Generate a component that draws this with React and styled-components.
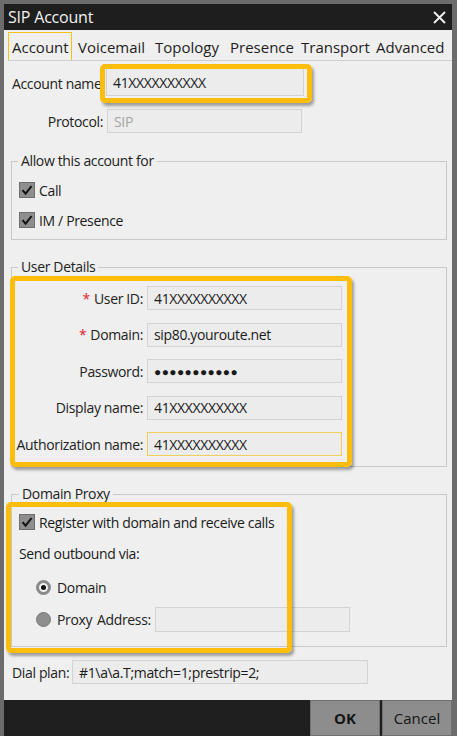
import React from 'react'
import styled, { createGlobalStyle } from 'styled-components'

const GlobalStyle = createGlobalStyle`
  html, body {
    margin: 0;
    padding: 0;
    background: #6c6c6c;
  }
  * { box-sizing: border-box; }
`

const FONT = `"Open Sans", "Noto Sans", sans-serif`

const Frame = styled.div`
  width: 457px;
  height: 736px;
  padding: 4px 5px 0 4px;
  background: #6c6c6c;
  display: flex;
  flex-direction: column;
  font-family: ${FONT};
  font-size: 14px;
  letter-spacing: -0.35px;
  color: #1a1a1a;
`

const TitleBar = styled.div`
  height: 26px;
  background: #1e1e1e;
  color: #f2f2f2;
  display: flex;
  align-items: center;
  justify-content: space-between;
  padding: 0 6px 0 4px;
  font-size: 16px;
  letter-spacing: -0.2px;
`

const Body = styled.div`
  flex: 1;
  background: #efefef;
  display: flex;
  flex-direction: column;
  padding: 0 6px 0 8px;
`

const TabBar = styled.div`
  height: 31px;
  display: flex;
  gap: 2px;
  margin: 0 -6px 0 -4px;
  border-bottom: 1px solid #cfcfcf;
`

const Tab = styled.div`
  width: ${p => p.$w}px;
  height: 28px;
  margin-top: 2px;
  padding-left: 3px;
  display: flex;
  align-items: center;
  font-size: 15px;
  letter-spacing: 0;
  color: #1d1d1d;
  border: 1px solid ${p => (p.$active ? '#f2c21a' : 'transparent')};
  border-bottom: none;
  white-space: nowrap;
`

const Row = styled.div`
  display: flex;
  align-items: center;
  height: ${p => p.$h || 24}px;
  margin-top: ${p => p.$mt || 0}px;
  gap: ${p => (p.$gap == null ? 4 : p.$gap)}px;
`

const Label = styled.div`
  width: ${p => p.$w}px;
  flex: none;
  text-align: ${p => p.$align || 'right'};
  white-space: nowrap;
  color: #222;
`

const Required = styled.span`
  color: #e0262b;
  margin-right: 4px;
`

const Field = styled.input`
  width: ${p => p.$w || 195}px;
  height: ${p => p.$h || 24}px;
  flex: none;
  padding: 0 6px;
  border: 1px solid ${p => (p.$focus ? '#f3cf57' : '#d3d3d3')};
  background: #ececec;
  font-family: ${FONT};
  font-size: ${p => p.$size || 14}px;
  letter-spacing: ${p => (p.$size ? '0.4px' : '-0.35px')};
  color: ${p => (p.disabled ? '#a5a5a5' : '#1a1a1a')};
  outline: none;
`

const Highlight = styled.div`
  position: relative;
  border-radius: 5px;
  width: ${p => p.$w}px;
  height: ${p => (p.$h ? p.$h + 'px' : 'auto')};
  padding: ${p => p.$pad || '0'};
  margin: ${p => p.$m || '0'};
  &::after {
    content: '';
    position: absolute;
    inset: 0;
    border: 5px solid #fdbd0d;
    border-radius: 5px;
    box-shadow: 2px 3px 3px rgba(0, 0, 0, 0.35);
    pointer-events: none;
    z-index: 2;
  }
`

const Group = styled.fieldset`
  margin: ${p => p.$mt}px -1px 0 -1px;
  padding: 0;
  border: 1px solid #c9c9c9;
  min-width: 0;
`

const Legend = styled.legend`
  margin-left: ${p => p.$ml || 6}px;
  padding: 0 3px;
  line-height: 20px;
  font-size: 14px;
  color: #222;
`

const Stack = styled.div`
  display: flex;
  flex-direction: column;
  gap: ${p => p.$gap}px;
  padding: ${p => p.$pad || '0'};
`

const Box = styled.span`
  width: 16px;
  height: 16px;
  flex: none;
  background: #8e8e8e;
  border: 1px solid #6e6e6e;
  display: flex;
  align-items: center;
  justify-content: center;
`

const Radio = styled.span`
  width: 15px;
  height: 15px;
  flex: none;
  border-radius: 50%;
  background: ${p => (p.$on ? '#f2f2f2' : '#8e8e8e')};
  border: ${p => (p.$on ? '3px solid #8a8a8a' : '1px solid #7a7a7a')};
  display: flex;
  align-items: center;
  justify-content: center;
  margin-left: ${p => p.$ml || 0}px;
  &::after {
    content: '';
    display: ${p => (p.$on ? 'block' : 'none')};
    width: 5px;
    height: 5px;
    border-radius: 50%;
    background: #111;
  }
`

const Footer = styled.div`
  height: 36px;
  background: #1f1f1f;
  display: flex;
  justify-content: flex-end;
  gap: 2px;
`

const Button = styled.button`
  width: 70px;
  height: 36px;
  border: 1px solid #707070;
  background: #8d8d8d;
  font-family: ${FONT};
  font-size: 15px;
  font-weight: ${p => (p.$primary ? 700 : 400)};
  color: #151515;
`

const Check = () => (
  <Box>
    <svg width="12" height="12" viewBox="0 0 12 12">
      <path d="M1.5 6.2 L4.6 9.6 L10.6 2" fill="none" stroke="#111" strokeWidth="2" />
    </svg>
  </Box>
)

const Close = () => (
  <svg width="13" height="13" viewBox="0 0 13 13">
    <path d="M1 1 L12 12 M12 1 L1 12" stroke="#f2f2f2" strokeWidth="1.8" />
  </svg>
)

const tabs = [
  ['Account', 64],
  ['Voicemail', 75],
  ['Topology', 73],
  ['Presence', 69],
  ['Transport', 73],
  ['Advanced', 76],
]

const userRows = [
  { label: 'User ID:', value: '41XXXXXXXXXX', req: true },
  { label: 'Domain:', value: 'sip80.youroute.net', req: true },
  { label: 'Password:', value: '●●●●●●●●●●●', size: 12 },
  { label: 'Display name:', value: '41XXXXXXXXXX' },
  { label: 'Authorization name:', value: '41XXXXXXXXXX', focus: true },
]

export default function App() {
  return (
    <Frame>
      <GlobalStyle />
      <TitleBar>
        <span>SIP Account</span>
        <Close />
      </TitleBar>
      <Body>
        <TabBar>
          {tabs.map(([name, w], i) => (
            <Tab key={name} $w={w} $active={i === 0}>
              {name}
            </Tab>
          ))}
        </TabBar>

        <Row $h={39} $mt={3} $gap={0}>
          <Label $w={88} $align="left">Account name</Label>
          <Highlight $w={212} $h={39} $pad="4px 6px 0 6px">
            <Field $h={28} $w={198} readOnly value="41XXXXXXXXXX" />
          </Highlight>
        </Row>

        <Row $mt={6}>
          <Label $w={91}>Protocol:</Label>
          <Field disabled value="SIP" />
        </Row>

        <Group $mt={18}>
          <Legend>Allow this account for</Legend>
          <Stack $gap={10} $pad="9px 0 9px 7px">
            <Row $h={20}>
              <Check />
              <span>Call</span>
            </Row>
            <Row $h={20}>
              <Check />
              <span>IM / Presence</span>
            </Row>
          </Stack>
        </Group>

        <Group $mt={17}>
          <Legend>User Details</Legend>
          <Highlight $w={342} $pad="10px 9px 11px 5px" $m="-1px 0 -1px -2px">
            <Stack $gap={12.5}>
              {userRows.map(r => (
                <Row key={r.label}>
                  <Label $w={128}>
                    {r.req && <Required>*</Required>}
                    {r.label}
                  </Label>
                  <Field readOnly value={r.value} $size={r.size} $focus={r.focus} />
                </Row>
              ))}
            </Stack>
          </Highlight>
        </Group>

        <Group $mt={17}>
          <Legend $ml={7}>Domain Proxy</Legend>
          <Highlight $w={286} $pad="10px 0 21px 13px" $m="-2px 0 -7px -6px">
            <Row $h={20}>
              <Check />
              <span>Register with domain and receive calls</span>
            </Row>
            <Row $h={20} $mt={11}>
              <span>Send outbound via:</span>
            </Row>
            <Row $h={20} $mt={14} $gap={6}>
              <Radio $on $ml={17} />
              <span>Domain</span>
            </Row>
            <Row $h={25} $mt={10} $gap={6}>
              <Radio $ml={17} />
              <Label $w={34} $align="left">Proxy</Label>
              <Label $w={52} $align="left">Address:</Label>
              <Field $w={195} $h={25} readOnly value="" />
            </Row>
          </Highlight>
        </Group>

        <Row $mt={13}>
          <Label $w={56} $align="left">Dial plan:</Label>
          <Field $w={296} readOnly value="#1\a\a.T;match=1;prestrip=2;" />
        </Row>
      </Body>
      <Footer>
        <Button $primary>OK</Button>
        <Button>Cancel</Button>
      </Footer>
    </Frame>
  )
}
